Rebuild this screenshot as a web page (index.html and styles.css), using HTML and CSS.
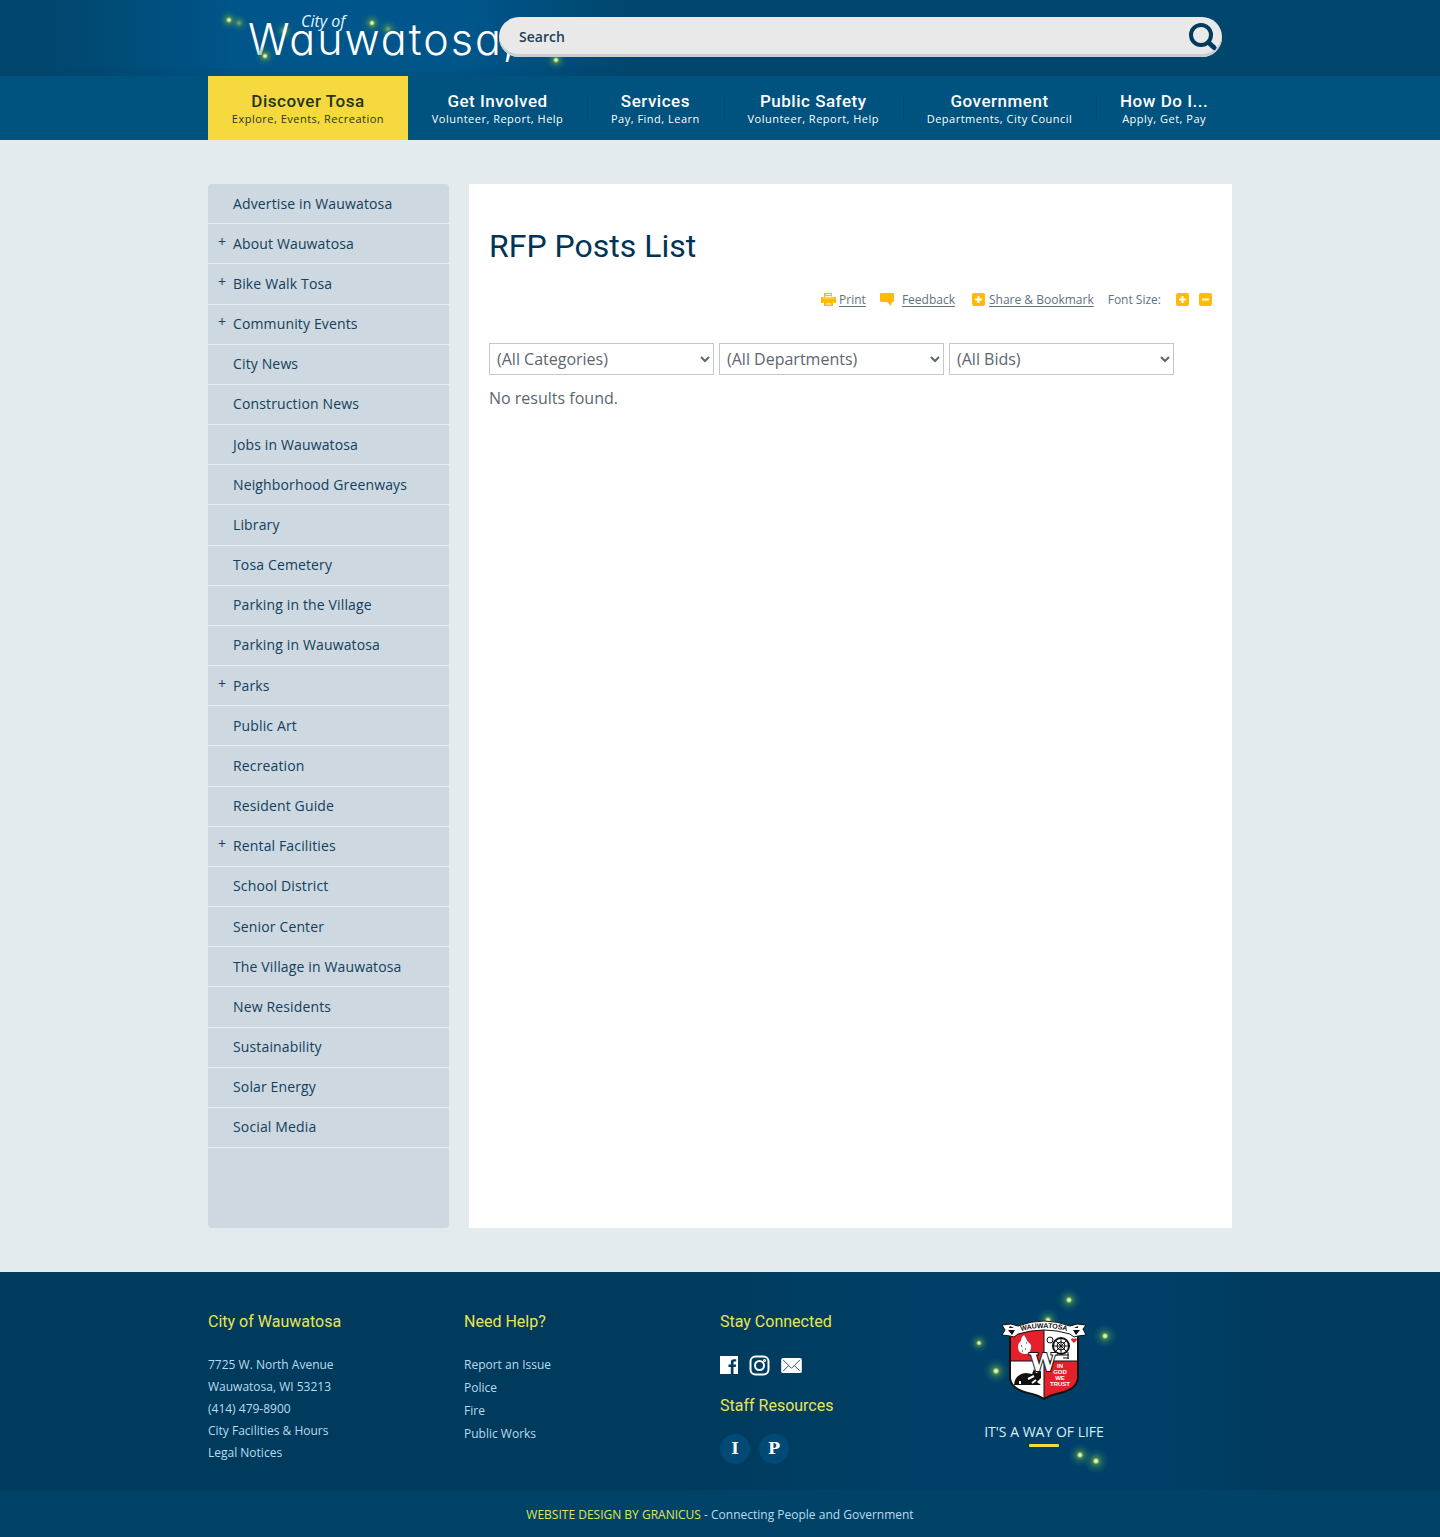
FILE: index.html
```html
<!DOCTYPE html>
<html lang="en">
<head>
<meta charset="utf-8">
<meta name="viewport" content="width=device-width, initial-scale=1">
<title>RFP Posts List | Wauwatosa, WI</title>
<link rel="stylesheet" href="styles.css">
</head>
<body>
<svg class="defs" width="0" height="0" aria-hidden="true">
  <defs>
    <radialGradient id="glow">
      <stop offset="0" stop-color="#f4ffd0"/>
      <stop offset=".13" stop-color="#c4e88c"/>
      <stop offset=".28" stop-color="#5f9a50" stop-opacity=".6"/>
      <stop offset=".6" stop-color="#2f7d5a" stop-opacity=".3"/>
      <stop offset="1" stop-color="#0b6a8a" stop-opacity="0"/>
    </radialGradient>
    <radialGradient id="dim">
      <stop offset="0" stop-color="#8cc070" stop-opacity=".9"/>
      <stop offset=".4" stop-color="#3f8a58" stop-opacity=".5"/>
      <stop offset="1" stop-color="#0b6a8a" stop-opacity="0"/>
    </radialGradient>
  </defs>
</svg>

<header class="site-header">
  <div class="wrap header-row">
    <a class="logo" href="#" aria-label="City of Wauwatosa, home">
      <svg width="400" height="76" viewBox="0 0 400 76">
        <circle cx="76" cy="31" r="10" fill="url(#dim)"/>
        <circle cx="180" cy="29" r="10" fill="url(#dim)"/>
        <text class="logo-small" x="93" y="27">City of</text>
        <text class="logo-big" x="40" y="55">Wauwatosa,</text>
        <circle cx="21" cy="20" r="11" fill="url(#glow)"/>
        <circle cx="31" cy="23" r="9" fill="url(#dim)"/>
        <circle cx="57" cy="56" r="11" fill="url(#glow)"/>
        <circle cx="164" cy="23" r="11" fill="url(#glow)"/>
        <circle cx="348" cy="60" r="11" fill="url(#glow)"/>
      </svg>
    </a>
    <form class="search" role="search">
      <input type="search" aria-label="Search" placeholder="Search">
      <button type="submit" aria-label="Submit search">
        <svg width="30" height="30" viewBox="0 0 30 30"><circle cx="13" cy="13" r="10" fill="none" stroke="#003a5c" stroke-width="4"/><path d="M20.500 20.500L26 25.500" stroke="#003a5c" stroke-width="5" stroke-linecap="round"/></svg>
      </button>
    </form>
  </div>
</header>

<nav class="main-nav" aria-label="Main">
  <ul class="wrap">
    <li class="active"><a href="#"><b>Discover Tosa</b><span>Explore, Events, Recreation</span></a></li>
    <li><a href="#"><b>Get Involved</b><span>Volunteer, Report, Help</span></a></li>
    <li><a href="#"><b>Services</b><span>Pay, Find, Learn</span></a></li>
    <li><a href="#"><b>Public Safety</b><span>Volunteer, Report, Help</span></a></li>
    <li><a href="#"><b>Government</b><span>Departments, City Council</span></a></li>
    <li><a href="#"><b>How Do I...</b><span>Apply, Get, Pay</span></a></li>
  </ul>
</nav>

<div class="wrap page">
  <aside class="sidebar">
    <ul>
      <li><a href="#">Advertise in Wauwatosa</a></li>
      <li><button type="button" aria-label="Expand About Wauwatosa">+</button><a href="#">About Wauwatosa</a></li>
      <li><button type="button" aria-label="Expand Bike Walk Tosa">+</button><a href="#">Bike Walk Tosa</a></li>
      <li><button type="button" aria-label="Expand Community Events">+</button><a href="#">Community Events</a></li>
      <li><a href="#">City News</a></li>
      <li><a href="#">Construction News</a></li>
      <li><a href="#">Jobs in Wauwatosa</a></li>
      <li><a href="#">Neighborhood Greenways</a></li>
      <li><a href="#">Library</a></li>
      <li><a href="#">Tosa Cemetery</a></li>
      <li><a href="#">Parking in the Village</a></li>
      <li><a href="#">Parking in Wauwatosa</a></li>
      <li><button type="button" aria-label="Expand Parks">+</button><a href="#">Parks</a></li>
      <li><a href="#">Public Art</a></li>
      <li><a href="#">Recreation</a></li>
      <li><a href="#">Resident Guide</a></li>
      <li><button type="button" aria-label="Expand Rental Facilities">+</button><a href="#">Rental Facilities</a></li>
      <li><a href="#">School District</a></li>
      <li><a href="#">Senior Center</a></li>
      <li><a href="#">The Village in Wauwatosa</a></li>
      <li><a href="#">New Residents</a></li>
      <li><a href="#">Sustainability</a></li>
      <li><a href="#">Solar Energy</a></li>
      <li><a href="#">Social Media</a></li>
    </ul>
  </aside>

  <main class="content">
    <h1>RFP Posts List</h1>
    <div class="tools">
      <a class="print" href="#"><svg width="15" height="17" viewBox="0 0 15 17"><path fill="#fb0" d="M3 1h8v4H3zM0 5h2v2h11V5h2v6h-2.500v-1h-10v1H0zM3 10h9v4H3z"/><path fill="#fb0" opacity=".7" d="M2 5h11v2H2z"/><path stroke="#fff" d="M5 2.500h5M4.500 4.500h6M5 12h5"/></svg><span>Print</span></a>
      <a class="feedback" href="#"><svg width="14" height="17" viewBox="0 0 14 17"><path fill="#fb0" d="M1 1h12q1 0 1 1v7q0 1-1 1h-1l-1 4-4-4H1q-1 0-1-1V2q0-1 1-1z"/></svg><span>Feedback</span></a>
      <a class="share" href="#"><svg width="13" height="17" viewBox="0 0 13 17"><rect y="1" width="13" height="13" rx="2" fill="#fb0"/><path stroke="#fff" stroke-width="2" d="M3 7.500h7M6.500 4v7"/></svg><span>Share &amp; Bookmark</span></a>
      <span class="size-label">Font Size:</span>
      <button type="button" aria-label="Increase font size"><svg width="13" height="17" viewBox="0 0 13 17"><rect y="1" width="13" height="13" rx="2" fill="#fb0"/><path stroke="#fff" stroke-width="2" d="M3 7.500h7M6.500 4v7"/></svg></button>
      <button type="button" aria-label="Decrease font size"><svg width="13" height="17" viewBox="0 0 13 17"><rect y="1" width="13" height="13" rx="2" fill="#fb0"/><path stroke="#fff" stroke-width="2" d="M3 7.500h7"/></svg></button>
    </div>
    <form class="filters">
      <select aria-label="Category"><option>(All Categories)</option></select>
      <select aria-label="Department"><option>(All Departments)</option></select>
      <select aria-label="Bids"><option>(All Bids)</option></select>
    </form>
    <p class="empty">No results found.</p>
  </main>
</div>

<footer class="site-footer">
  <div class="footer-main">
    <div class="wrap footer-cols">
      <section>
        <h2>City of Wauwatosa</h2>
        <ul class="address">
          <li>7725 W. North Avenue</li>
          <li>Wauwatosa, WI 53213</li>
          <li>(414) 479-8900</li>
          <li><a href="#">City Facilities &amp; Hours</a></li>
          <li><a href="#">Legal Notices</a></li>
        </ul>
      </section>
      <section>
        <h2>Need Help?</h2>
        <ul class="help">
          <li><a href="#">Report an Issue</a></li>
          <li><a href="#">Police</a></li>
          <li><a href="#">Fire</a></li>
          <li><a href="#">Public Works</a></li>
        </ul>
      </section>
      <section>
        <h2>Stay Connected</h2>
        <div class="social">
          <a href="#" aria-label="Facebook"><svg width="18" height="18" viewBox="0 0 18 18"><path fill="#fff" d="M0 0h18v18h-4.500v-7h2.200l.4-2.600h-2.600V6.800q0-1.200 1.300-1.200h1.400V3.200h-2.300q-3.100 0-3.100 3.300v1.900H8.500V11h2.300v7H0z"/></svg></a>
          <a href="#" aria-label="Instagram"><svg width="21" height="21" viewBox="0 0 21 21" fill="none" stroke="#fff" stroke-width="2"><rect x="1.500" y="1.500" width="18" height="18" rx="5"/><circle cx="10.500" cy="10.500" r="4.500"/><circle cx="15.500" cy="5.500" r=".6"/></svg></a>
          <a href="#" aria-label="Email"><svg width="21" height="15" viewBox="0 0 22 16"><rect width="22" height="16" rx="2" fill="#fff"/><path d="M2 2l9 9 9-9M2 14l6-6M20 14l-6-6" fill="none" stroke="#1a5070"/></svg></a>
        </div>
        <h2>Staff Resources</h2>
        <div class="staff"><a href="#" aria-label="Intranet">I</a><a href="#" aria-label="Payroll">P</a></div>
      </section>
      <section class="crest">
        <svg width="136" height="112" viewBox="0 0 136 112" role="img" aria-label="City of Wauwatosa crest">
          <circle cx="93" cy="4" r="12" fill="url(#glow)"/>
          <circle cx="72" cy="24" r="12" fill="url(#glow)"/>
          <circle cx="129" cy="40" r="12" fill="url(#glow)"/>
          <circle cx="3" cy="47" r="10" fill="url(#glow)"/>
          <circle cx="20" cy="75" r="13" fill="url(#glow)"/>
          <clipPath id="shield"><path d="M34 35Q68 26 102 35V82Q101 93 84 97Q74 99 68 103Q62 99 52 97Q35 93 34 82Z"/></clipPath>
          <g clip-path="url(#shield)">
            <path fill="#fff" d="M30 25h76v80H30z"/>
            <path fill="#e3202b" d="M30 25h38v40H30zM68 65h38v40H68z"/>
            <path stroke="#111" d="M68 25v80M30 65h76"/>
          </g>
          <path fill="none" stroke="#111" stroke-width="2" d="M34 35Q68 26 102 35V82Q101 93 84 97Q74 99 68 103Q62 99 52 97Q35 93 34 82Z"/>
          <path fill="#fff" d="M48 39q2 3 4 7 4 2 3 6-1 6-6 6-7 0-7-7 0-4 3-6 0-4 3-6z"/>
          <path stroke="#111" d="M45 50h1M50 47h1M49 53h1M46 55h1"/>
          <g fill="none" stroke="#111"><circle cx="85" cy="50" r="8" stroke-width="2"/><circle cx="85" cy="50" r="4"/><path d="M85 41v18M76 50h18M79 44l12 12M91 44L79 56M78 59h15M92 56v7M87 62h6"/><circle cx="74" cy="44" r="3"/></g>
          <path fill="#e3202b" d="M98 47l-3-3q0-3 3-1 3-2 3 1z"/>
          <path fill="#111" d="M38 89q1-11 12-12l6 1 2-5 2 4 5-2v7l-4 4 4 3H38z"/>
          <path stroke="#fff" stroke-width="2" d="M52 83l6-3M56 87l4-3M44 85v3"/>
          <path fill="#fff" stroke="#111" d="M26 29l9-1 7 2Q68 20 94 30l7-2 9 1-3 4 3 6-8 1-4 1-4-3Q68 30 42 38l-4 3-4-1-8-1 3-5z"/>
          <path fill="#111" d="M32 34l7 0-3 5zM97 34l7 0-4 5zM34 30l4 2h-5zM98 32l4-2v2z"/>
          <path id="arc" fill="none" d="M42 36Q68 28 94 36"/>
          <text class="crest-name"><textPath href="#arc" startOffset="50%">WAUWATOSA</textPath></text>
          <text class="crest-w" x="67" y="75">W</text>
          <g class="crest-motto"><text x="84" y="72">IN</text><text x="84" y="78">GOD</text><text x="84" y="84">WE</text><text x="84" y="90">TRUST</text></g>
        </svg>
        <p>IT'S A WAY OF LIFE</p>
        <svg width="136" height="36" viewBox="0 0 136 36" aria-hidden="true"><rect x="53" y="0" width="30" height="3" rx="1" fill="#f6d93e"/><circle cx="104" cy="11" r="12" fill="url(#glow)"/><circle cx="120" cy="17" r="13" fill="url(#glow)"/></svg>
      </section>
    </div>
  </div>
  <p class="credit"><a href="#">WEBSITE DESIGN BY GRANICUS</a> - Connecting People and Government</p>
</footer>
</body>
</html>
```
FILE: styles.css
```css
* { box-sizing: border-box; }

body {
  margin: 0;
  background: #e3ebee;
  color: #5b6770;
  font-family: "Open Sans", sans-serif;
  font-size: 16px;
}

a { color: inherit; text-decoration: none; }
ul { list-style: none; margin: 0; padding: 0; }
h1, h2, p { margin: 0; }
button { border: 0; padding: 0; background: none; color: inherit; font: inherit; cursor: pointer; }
svg { display: block; overflow: visible; }
.defs { position: absolute; }
.wrap { width: 100%; max-width: 1024px; margin: 0 auto; }

/* Header */
.site-header {
  background:
    linear-gradient(to bottom, transparent 85%, rgba(0, 60, 95, .2)),
    linear-gradient(to right, #00466d 3%, #00568b 17%, #00568b 32%, #00466d 44%);
}
.header-row { display: flex; align-items: center; height: 76px; padding-right: 10px; }
.logo { flex: 0 0 291px; width: 291px; }
.logo-small { fill: #e8f6ff; font: italic 16px "Open Sans", sans-serif; }
.logo-big {
  fill: #fff;
  font: 300 43px Inter, sans-serif;
  font-feature-settings: "cv11";
  letter-spacing: 2px;
}
.search {
  position: relative;
  display: flex;
  align-items: center;
  flex: 1;
  height: 40px;
  margin-bottom: 2px;
  padding: 0 4px 0 20px;
  border-radius: 20px;
  background: #e9e9e9;
  box-shadow: inset 0 -3px #c9ced2;
}
.search input {
  flex: 1;
  min-width: 0;
  border: 0;
  padding: 0 0 2px;
  background: none;
  font: 600 14px "Open Sans", sans-serif;
  color: #1c4058;
}
.search input::placeholder { color: #1c4058; opacity: 1; }

/* Main navigation */
.main-nav { background: #00527f; }
.main-nav ul { display: flex; }
.main-nav li { flex: 1 1 auto; text-align: center; }
.main-nav li + li + li { background: linear-gradient(#004a75, #004a75) left center / 1px 24px no-repeat; }
.main-nav a { display: block; padding: 15px 0 14px; color: #fff; white-space: nowrap; }
.main-nav b { display: block; font: 500 17px/20px Roboto, sans-serif; letter-spacing: .03em; }
.main-nav span { display: block; font-size: 11px; line-height: 15px; letter-spacing: .045em; }
.main-nav .active { background: #f6d83f; }
.main-nav .active a { color: #24361f; }

/* Page body */
.page { display: flex; gap: 20px; padding: 44px 0; }
.sidebar {
  display: flex;
  flex-direction: column;
  flex: 0 0 241px;
  padding-bottom: 80px;
  border-radius: 4px;
  background: #cdd8e0;
  color: #13405c;
  font-size: 14px;
}
.sidebar ul { flex: 1; display: grid; grid-auto-rows: 1fr; }
.sidebar li { display: flex; align-items: center; padding-left: 10px; border-bottom: 1px solid #e6eff5; }
.sidebar a { flex: 1; line-height: 20px; letter-spacing: .01em; }
.sidebar a:first-child { padding-left: 15px; }
.sidebar button { width: 15px; padding-bottom: 4px; line-height: 16px; text-align: left; }

.content { flex: 1; min-width: 0; min-height: 1044px; padding: 40px 20px; background: #fff; }
.content h1 { color: #003457; font: 400 32px/44px Roboto, sans-serif; }
.tools {
  display: flex;
  align-items: center;
  justify-content: flex-end;
  margin-top: 20px;
  color: #5d7382;
  font-size: 12px;
  line-height: 24px;
}
.tools a { display: flex; align-items: center; gap: 3px; margin-right: 14px; }
.tools .feedback { gap: 8px; margin-right: 17px; }
.tools .share { gap: 4px; }
.tools a span { text-decoration: underline; text-underline-offset: 2px; }
.tools button { margin-left: 10px; }
.tools .size-label + button { margin-left: 15px; }
.filters { display: flex; gap: 5px; margin-top: 31px; }
.filters select {
  width: 225px;
  height: 32px;
  padding: 0 3px;
  border: 1px solid #c4c8cb;
  border-radius: 0;
  background: #fff;
  color: #5b6770;
  font: 16px "Open Sans", sans-serif;
}
.empty { margin-top: 11px; line-height: 24px; }

/* Footer */
.site-footer { background: #003a5c; color: #b9dcf0; font-size: 12px; }
.footer-main { background: linear-gradient(to right, #003a5c 45%, #004068 65%, #004068 80%, #003a5c 90%); }
.footer-cols { display: grid; grid-template-columns: repeat(4, 1fr); min-height: 218px; padding-top: 39px; }
.site-footer h2 { color: #ece356; font: 400 16px/22px Roboto, sans-serif; }
.address { padding-top: 21px; }
.help { padding-top: 20px; }
.address li { line-height: 22px; }
.help li { line-height: 23px; }
.social { display: flex; align-items: center; gap: 11px; height: 62px; padding-top: 2px; }
.staff { display: flex; gap: 9px; padding-top: 17px; }
.staff a {
  width: 30px;
  border-radius: 50%;
  background: #004a75;
  color: #fff;
  font: bold 16px/30px "DejaVu Serif", serif;
  text-align: center;
}
.crest { width: 136px; margin-top: -15px; }
.crest p { color: #d8eefb; font-size: 14px; line-height: 20px; text-align: center; margin: 14px 0 2px; white-space: nowrap; }
.crest-name { fill: #111; font: bold 7px "Liberation Sans", sans-serif; text-anchor: middle; }
.crest-w { fill: #fff; stroke: #111; stroke-width: 2px; paint-order: stroke; font: bold 24px "DejaVu Serif", serif; text-anchor: middle; }
.crest-motto { fill: #fff; font: bold 6px "Liberation Sans", sans-serif; text-anchor: middle; }
.credit { padding: 13px 0 10px; background: #004268; line-height: 24px; text-align: center; }
.credit a { color: #e2e45a; }
```
